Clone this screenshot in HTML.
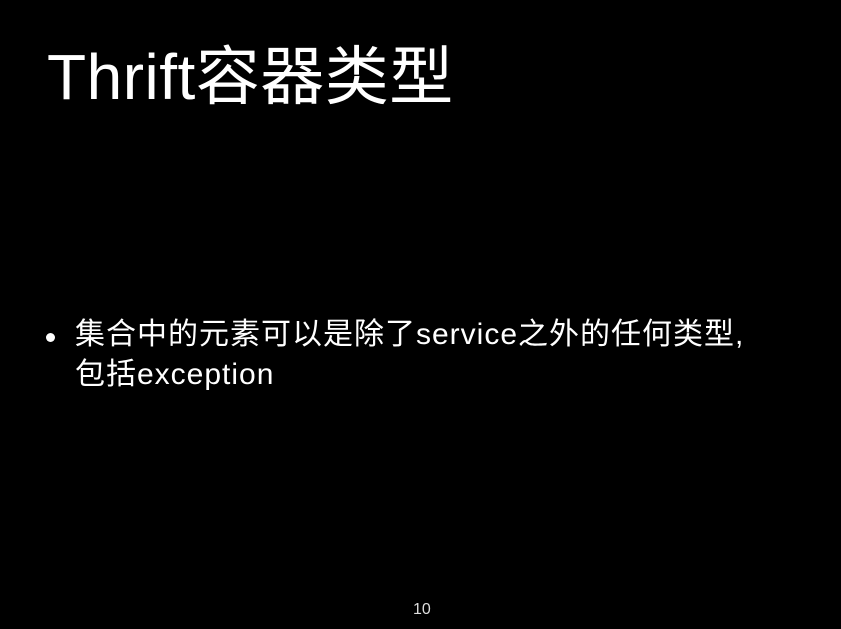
<!DOCTYPE html>
<html><head><meta charset="utf-8"><style>
html,body{margin:0;padding:0;background:#000;}
body{width:841px;height:629px;position:relative;overflow:hidden;font-family:"Liberation Sans","Noto Sans CJK SC",sans-serif;color:#fff;}
.t{position:absolute;left:47px;top:40px;font-size:64px;line-height:74px;white-space:nowrap;letter-spacing:0.5px;}
.b{position:absolute;left:75px;top:315px;font-size:30px;line-height:40px;white-space:nowrap;letter-spacing:1px;}
.dot{position:absolute;left:46px;top:333px;width:9px;height:9px;border-radius:50%;background:#fff;}
.n{position:absolute;left:413px;top:601px;font-size:16px;line-height:18px;color:#ddd;}
</style></head><body>
<div class="t">Thrift容器类型</div>
<div class="dot"></div>
<div class="b">集合中的元素可以是除了service之外的任何类型,<br>包括exception</div>
<div class="n">10</div>
</body></html>
